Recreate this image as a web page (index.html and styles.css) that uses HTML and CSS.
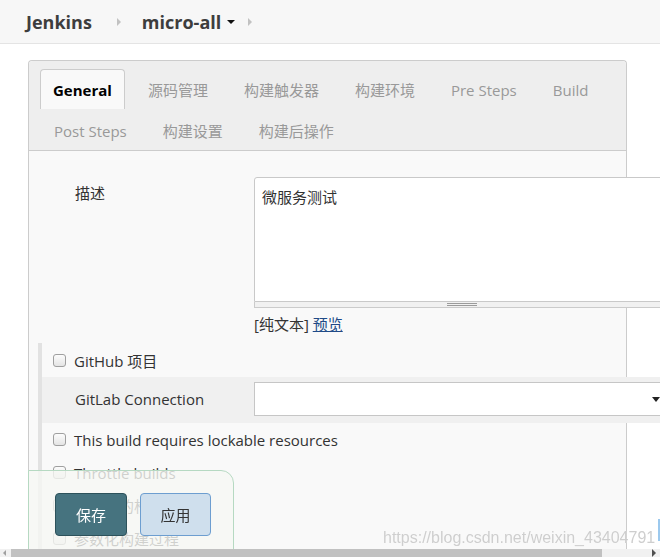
FILE: index.html
```html
<!DOCTYPE html>
<html lang="zh">
<head>
<meta charset="utf-8">
<title>micro-all Config [Jenkins]</title>
<link rel="stylesheet" href="styles.css">
</head>
<body>
<header class="topbar">
  <a class="crumb">Jenkins</a>
  <span class="sep"></span>
  <a class="crumb crumb-job">micro-all</a>
  <span class="caret"></span>
  <span class="sep sep-last"></span>
</header>

<main class="main">
  <div class="panel">
    <div class="tabbar">
      <div class="tabrow">
        <span class="tab active">General</span>
        <span class="tab">源码管理</span>
        <span class="tab">构建触发器</span>
        <span class="tab">构建环境</span>
        <span class="tab">Pre Steps</span>
        <span class="tab">Build</span>
      </div>
      <div class="tabrow">
        <span class="tab">Post Steps</span>
        <span class="tab">构建设置</span>
        <span class="tab">构建后操作</span>
      </div>
    </div>

    <div class="content">
      <div class="desc-row">
        <div class="label">描述</div>
        <div class="field">
          <div class="textarea">微服务测试</div>
          <div class="resizer"><span class="grip"></span></div>
          <div class="preview">[纯文本]&nbsp;<a class="link">预览</a></div>
        </div>
      </div>

      <div class="section">
        <div class="row check-row first"><span class="cb"></span><span>GitHub 项目</span></div>
        <div class="row gitlab-row">
          <div class="label">GitLab Connection</div>
          <div class="select"><span class="arrow"></span></div>
        </div>
        <div class="row check-row"><span class="cb"></span><span>This build requires lockable resources</span></div>
        <div class="row check-row"><span class="cb"></span><span>Throttle builds</span></div>
        <div class="row check-row"><span class="cb"></span><span>丢弃旧的构建</span></div>
        <div class="row check-row"><span class="cb"></span><span>参数化构建过程</span></div>
      </div>
    </div>
  </div>
</main>

<div class="savebar">
  <button class="btn btn-save">保存</button>
  <button class="btn btn-apply">应用</button>
</div>

<div class="watermark">https://blog.csdn.net/weixin_43404791</div>
<div class="edge-mark"></div>

<div class="hscroll">
  <span class="hs-left"></span>
  <span class="hs-thumb"></span>
  <span class="hs-right"></span>
</div>
</body>
</html>
```

FILE: styles.css
```css
html, body {
  margin: 0;
  padding: 0;
  overflow: hidden;
  width: 660px;
  height: 557px;
  background: #fff;
  font-family: "Open Sans", "Noto Sans CJK SC", sans-serif;
  font-size: 15px;
  color: #333;
}

.topbar {
  height: 43px;
  background: #f7f7f7;
  border-bottom: 1px solid #e4e4e4;
  display: flex;
  align-items: center;
  padding-left: 26px;
}

.crumb {
  font-size: 18px;
  font-weight: 700;
  color: #3d3d3d;
  line-height: 22px;
}

.sep {
  width: 0;
  height: 0;
  border-top: 4px solid transparent;
  border-bottom: 4px solid transparent;
  border-left: 4px solid #c2c2c2;
  margin: 0 21px 0 25px;
}

.sep-last {
  margin: 0 0 0 13px;
}

.caret {
  width: 0;
  height: 0;
  border-left: 4px solid transparent;
  border-right: 4px solid transparent;
  border-top: 4px solid #111;
  margin-left: 6px;
}

.main {
  padding: 16px 0 0 28px;
}

.panel {
  width: 597px;
  border: 1px solid #cccccc;
  border-bottom: none;
  border-radius: 4px 4px 0 0;
  background: #f9f9f9;
  height: 600px;
}

.tabbar {
  background: #eeeeee;
  border-radius: 4px 4px 0 0;
  border-bottom: 1px solid #cccccc;
  padding: 8px 0 0 11px;
  height: 81px;
  display: flex;
  flex-direction: column;
  gap: 1px;
}

.tabrow {
  display: flex;
  gap: 9px;
  height: 40px;
}

.tab {
  display: flex;
  align-items: center;
  padding: 0 12px 0 13px;
  color: #999999;
  white-space: nowrap;
  border: 1px solid transparent;
  border-bottom: none;
  border-radius: 4px 4px 0 0;
}

.tab.active {
  background: #f9f9f9;
  border-color: #cccccc;
  color: #000;
  font-weight: 700;
  padding: 0 12px 0 12px;
}

.content {
  background: #f9f9f9;
}

.desc-row {
  display: flex;
  padding: 26px 0 0 46px;
}

.desc-row .label {
  flex: none;
  width: 179px;
  padding-top: 5px;
  line-height: 22px;
}

.field {
  width: 416px;
  flex: none;
}

.textarea {
  box-sizing: border-box;
  height: 125px;
  background: #fff;
  border: 1px solid #c9c9c9;
  border-radius: 3px 0 0 0;
  padding: 8px 7px;
  line-height: 22px;
  color: #333;
}

.resizer {
  box-sizing: border-box;
  height: 6px;
  background: #f1f1f1;
  border: 1px solid #cbcbcb;
  border-top: none;
  display: flex;
  justify-content: center;
  align-items: center;
}

.grip {
  width: 30px;
  height: 1px;
  border-top: 1px solid #9b9b9b;
  border-bottom: 1px solid #9b9b9b;
}

.preview {
  margin-top: 4px;
  height: 22px;
  display: flex;
  align-items: center;
  color: #333;
}

.link {
  color: #204a87;
  text-decoration: underline;
}

.section {
  margin: 9px 0 0 9px;
  border-left: 4px solid #e2e2e2;
  width: 628px;
}

.row {
  display: flex;
  align-items: center;
}

.check-row {
  height: 33px;
  padding-left: 11px;
  gap: 8px;
}

.check-row.first {
  height: 34px;
}

.cb {
  box-sizing: border-box;
  width: 13px;
  height: 13px;
  border: 1px solid #9f9f9f;
  border-radius: 3px;
  background: linear-gradient(#fcfcfc, #e4e4e4);
  flex: none;
}

.gitlab-row {
  height: 46px;
  background: #f0f0f0;
  align-items: flex-start;
  box-sizing: border-box;
  padding: 5px 0 0 33px;
}

.gitlab-row .label {
  flex: none;
  width: 179px;
  line-height: 34px;
  color: #333;
}

.select {
  flex: none;
  box-sizing: border-box;
  width: 416px;
  height: 34px;
  background: #fff;
  border: 1px solid #c6c6c6;
  display: flex;
  align-items: center;
  justify-content: flex-end;
  padding-right: 9px;
}

.arrow {
  width: 0;
  height: 0;
  border-left: 4px solid transparent;
  border-right: 4px solid transparent;
  border-top: 5px solid #222;
}

.savebar {
  position: fixed;
  left: 28px;
  top: 470px;
  width: 206px;
  height: 100px;
  border: 1px solid #b6d9c2;
  border-radius: 0 13px 0 0;
  background: rgba(246, 248, 244, 0.8);
  display: flex;
  gap: 13px;
  align-items: flex-start;
  padding: 22px 0 0 26px;
  box-sizing: border-box;
}

.btn {
  width: 72px;
  height: 43px;
  border-radius: 4px;
  font-family: "Open Sans", "Noto Sans CJK SC", sans-serif;
  font-size: 15px;
  padding: 0;
}

.btn-save {
  background: #46737f;
  border: 1px solid #2d525b;
  color: #fff;
}

.btn-apply {
  background: #cfdfed;
  border: 1px solid #6d9ed0;
  color: #333;
  width: 71px;
}

.watermark {
  position: fixed;
  left: 383px;
  top: 527px;
  font-family: "Liberation Sans", Arial, sans-serif;
  font-size: 16px;
  line-height: 22px;
  color: rgba(190, 190, 190, 0.75);
  text-shadow: 0 0 1px rgba(255, 255, 255, 0.9);
  white-space: nowrap;
}

.edge-mark {
  position: fixed;
  left: 658px;
  top: 519px;
  width: 2px;
  height: 22px;
  background: #9cc9ee;
}

.hscroll {
  position: fixed;
  left: 0;
  bottom: 0;
  width: 660px;
  height: 8px;
  background: #f1f1f1;
  display: flex;
  align-items: center;
}

.hs-left {
  width: 0;
  height: 0;
  border-top: 3px solid transparent;
  border-bottom: 3px solid transparent;
  border-right: 3px solid #a0a0a0;
  margin: 0 5px 0 3px;
}

.hs-thumb {
  width: 591px;
  height: 8px;
  background: #c1c1c1;
}

.hs-right {
  width: 0;
  height: 0;
  border-top: 4px solid transparent;
  border-bottom: 4px solid transparent;
  border-left: 4px solid #505050;
  margin-left: 50px;
}
```
